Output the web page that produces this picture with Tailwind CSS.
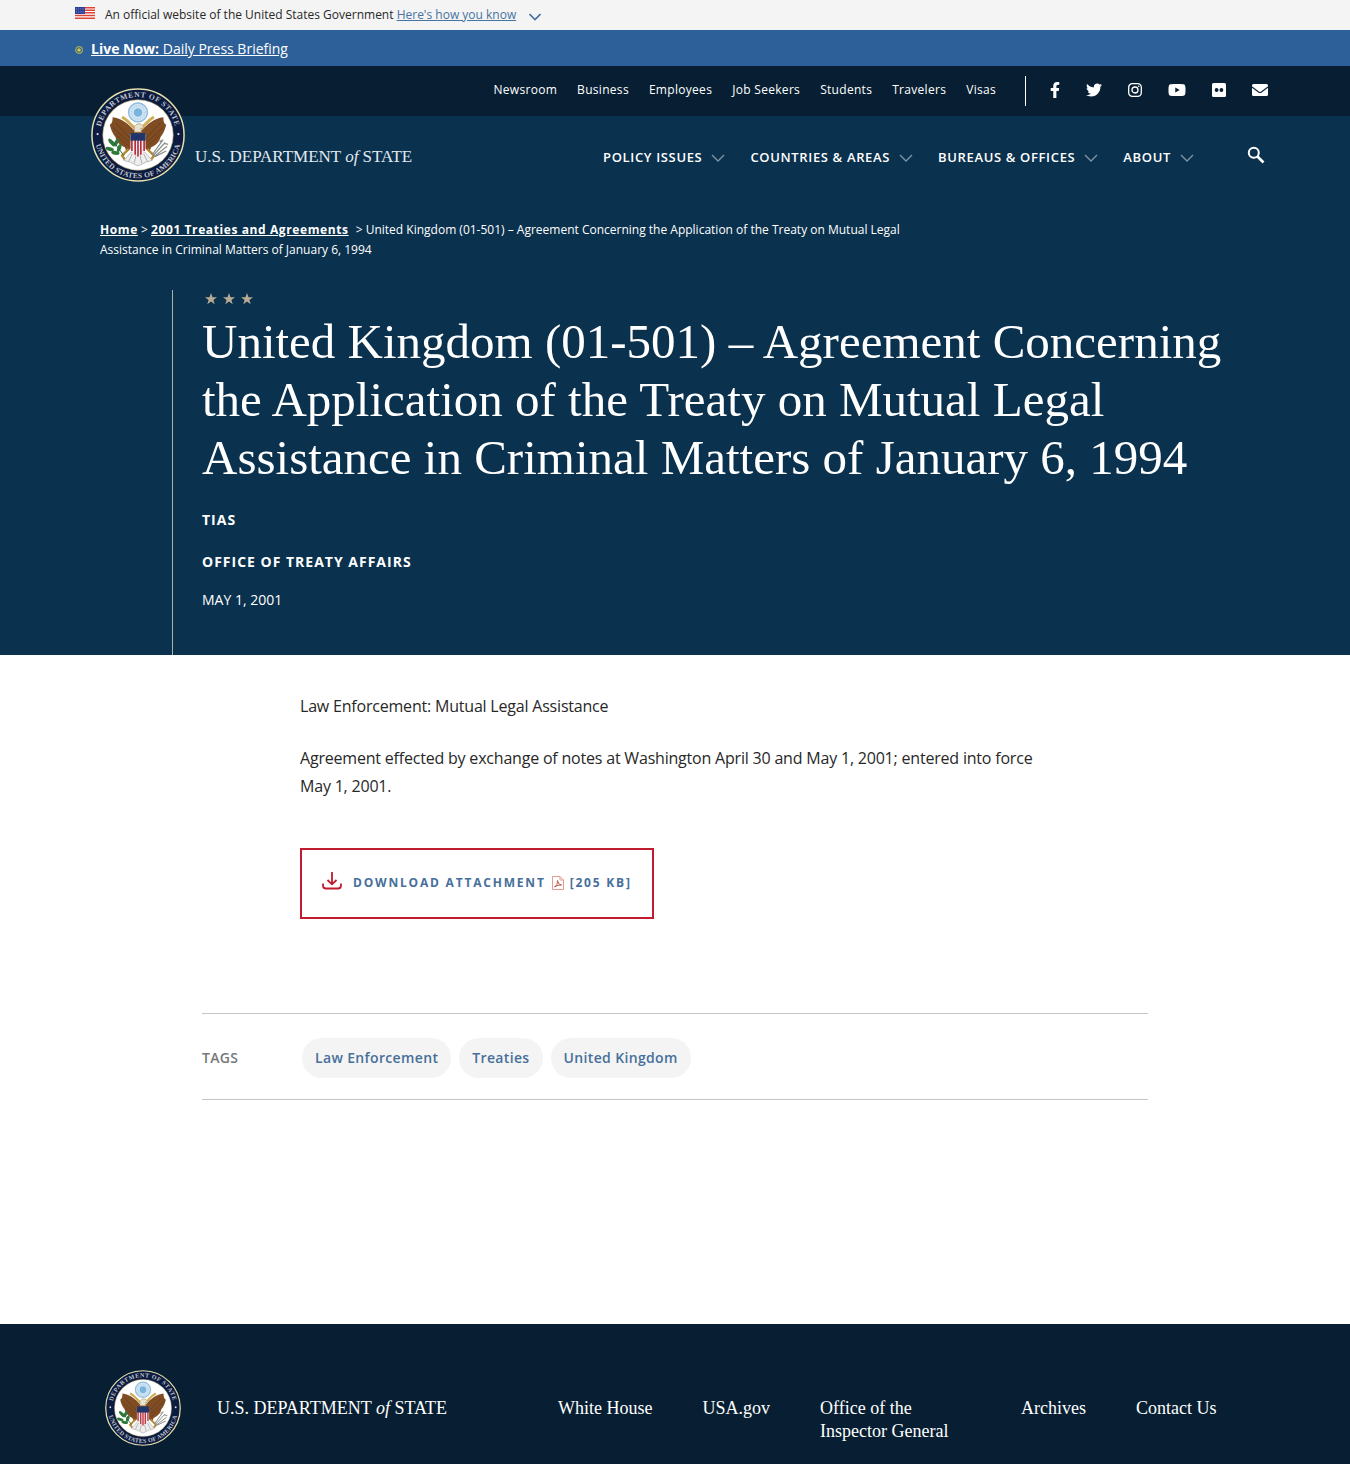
<!DOCTYPE html>
<html lang="en">
<head>
<meta charset="utf-8">
<meta name="viewport" content="width=device-width, initial-scale=1">
<title>United Kingdom (01-501) - United States Department of State</title>
<script src="https://cdn.jsdelivr.net/npm/@tailwindcss/browser@4"></script>
</head>
<body class="flex min-h-screen flex-col bg-white font-['Open_Sans',sans-serif] text-[#282828]">

<svg class="hidden" aria-hidden="true">
  <symbol id="seal" viewBox="0 0 100 100">
    <circle cx="50" cy="50" r="49" fill="#0c1b40" stroke="#e6dfae" stroke-width="1.6"/>
    <circle cx="50" cy="50" r="37.500" fill="#fff" stroke="#b9a96a" stroke-width=".6"/>
    <path id="arcTop" d="M9.500 50A40.500 40.500 0 0 1 90.500 50" fill="none"/>
    <path id="arcBottom" d="M4 50A46 46 0 0 0 96 50" fill="none"/>
    <g fill="#c3c8d0" font-family="Liberation Serif, serif" font-size="8" font-weight="bold" text-anchor="middle">
      <text letter-spacing=".7"><textPath href="#arcTop" startOffset="50%">DEPARTMENT OF STATE</textPath></text>
      <text letter-spacing=".3"><textPath href="#arcBottom" startOffset="50%">UNITED STATES OF AMERICA</textPath></text>
    </g>
    <circle cx="7" cy="49" r="1.200" fill="#ddd"/><circle cx="93" cy="49" r="1.200" fill="#ddd"/>
    <circle cx="50" cy="26" r="10" fill="#d5e7f5" stroke="#8fbcdc" stroke-width="1.500"/>
    <circle cx="50" cy="26" r="7" fill="none" stroke="#b6d4ea" stroke-width="2" stroke-dasharray="1.500 1"/>
    <circle cx="50" cy="26" r="4.500" fill="#79b4dc"/>
    <path d="M46 45C40 38 32 32 23 31C23 36 22 38 20 39C21 44 23 48 26 52C27 57 31 61 36 63L38 68L44 63L50 66L56 63L62 68L64 63C69 61 73 57 74 52C77 48 79 44 80 39C78 38 77 36 77 31C68 32 60 38 54 45Z" fill="#804c24"/>
    <path d="M26 37L43 55M23 42L41 58M27 50L40 62M74 37L57 55M77 42L59 58M73 50L60 62" stroke="#6a3d18" stroke-width="1"/>
    <path d="M33 31C38 33 43 40 47 43M67 31C62 33 57 40 53 43" fill="none" stroke="#d0ad55" stroke-width="3"/>
    <path d="M46 47L46 41Q50 36 54 39L57 42L53 43L54 47Z" fill="#e9e2cf" stroke="#8a6d35" stroke-width=".5"/>
    <path d="M40 65L33 72L36 76M60 65L67 72L64 76" fill="none" stroke="#b58a30" stroke-width="2.500"/>
    <path d="M43 68L35 77L42 79L50 83L58 79L65 77L57 68Z" fill="#eee" stroke="#aaa" stroke-width=".8"/>
    <path d="M44 70L40 78M48 71L46 80M52 71L54 80M56 70L60 78" stroke="#999" stroke-width=".8"/>
    <path d="M42 49H58V64Q57 70 50 73Q43 70 42 64Z" fill="#f3eeee"/>
    <path d="M43.500 54V67M47 54V71M50 54V73M53 54V71M56.500 54V67" stroke="#b6283a" stroke-width="1.700"/>
    <path d="M42 48H58V56H42Z" fill="#20366b"/>
    <g fill="#2f7a3b"><ellipse cx="22" cy="58" rx="2" ry="5" transform="rotate(-40 22 58)"/><ellipse cx="27" cy="58" rx="2" ry="4.500" transform="rotate(25 27 58)"/><ellipse cx="20" cy="65" rx="2" ry="4.500" transform="rotate(-75 20 65)"/><ellipse cx="30" cy="64" rx="2" ry="4.500" transform="rotate(20 30 64)"/><ellipse cx="26" cy="69" rx="2" ry="4.500" transform="rotate(-80 26 69)"/></g>
    <path d="M24 57L35 72" stroke="#2f6a35" stroke-width="1"/>
    <path d="M65 71L76 56M66 72L79 58M67 73L81 62M68 73L80 67M73 57L77 55M78 59L82 60" stroke="#8b8d88" stroke-width="1.300"/>
  </symbol>
  <symbol id="chevron" viewBox="0 0 14 8"><path d="M1 1L7 7L13 1" fill="none" stroke="currentColor" stroke-width="1.300"/></symbol>
</svg>

<section class="bg-[#f4f4f4]" aria-label="Official website">
  <div class="mx-auto flex h-[30px] max-w-[1200px] items-center text-xs">
    <svg class="mb-1 h-3 w-5" viewBox="0 0 20 12" aria-hidden="true">
      <path d="M0 0H20V12H0Z" fill="#fff"/>
      <path d="M0 .7H20M0 3.200H20M0 5.700H20M0 8.500H20M0 11.200H20" stroke="#dc4437" stroke-width="1.400"/>
      <path d="M0 0H10V7H0Z" fill="#2d3f96"/>
      <path d="M1 2H10M1 5H10" stroke="#9aa6d8" stroke-width=".8" stroke-dasharray="1 1.200"/>
    </svg>
    <p class="ml-[10px]">An official website of the United States Government <button type="button" class="text-[#4673a0] underline">Here's how you know</button></p>
    <svg class="mt-1 ml-[13px] h-2 w-3 text-[#4a6fa5]" viewBox="0 0 12 8" aria-hidden="true"><path d="M.5 1L6 6.500L11.500 1" fill="none" stroke="currentColor" stroke-width="1.700"/></svg>
  </div>
</section>

<section class="bg-[#2d5f99] text-white" aria-label="Live events">
  <div class="mx-auto flex h-9 max-w-[1200px] items-center gap-2 pt-[2px] text-sm">
    <svg class="mt-[2px] size-2" viewBox="0 0 8 8" aria-hidden="true"><circle cx="4" cy="4" r="3.300" fill="none" stroke="#a3ad55" stroke-width="1.200"/><circle cx="4" cy="4" r="1.800" fill="#d6c843"/></svg>
    <a href="#" class="underline"><strong>Live Now:</strong> Daily Press Briefing</a>
  </div>
</section>

<header class="relative bg-[#0a314d] text-white">
  <div class="bg-[#081f33]">
    <div class="mx-auto flex h-[50px] max-w-[1200px] items-center justify-end pr-[7px]">
      <nav class="flex gap-5 pb-[3px] text-xs tracking-wide" aria-label="Audiences">
        <a href="#">Newsroom</a><a href="#">Business</a><a href="#">Employees</a><a href="#">Job Seekers</a><a href="#">Students</a><a href="#">Travelers</a><a href="#">Visas</a>
      </nav>
      <div class="ml-[29px] flex h-[30px] items-center gap-[26px] border-l border-white pb-[2px] pl-6">
        <a href="#" aria-label="Facebook"><svg class="h-4 w-[10px]" viewBox="0 0 320 512" fill="currentColor"><path d="M279.140 288l14.220-92.660h-88.910v-60.130c0-25.350 12.420-50.060 52.240-50.060h40.420V6.260S260.430 0 225.360 0c-73.220 0-121.080 44.380-121.080 124.720v70.620H22.890V288h81.390v224h100.170V288z"/></svg></a>
        <a href="#" aria-label="Twitter"><svg class="size-4" viewBox="0 0 512 512" fill="currentColor"><path d="M459.370 151.716c.325 4.548.325 9.097.325 13.645 0 138.720-105.583 298.558-298.558 298.558-59.452 0-114.680-17.219-161.137-47.106 8.447.974 16.568 1.299 25.340 1.299 49.055 0 94.213-16.568 130.274-44.832-46.132-.975-84.792-31.188-98.112-72.772 6.498.974 12.995 1.624 19.818 1.624 9.421 0 18.843-1.300 27.614-3.573-48.081-9.747-84.143-51.980-84.143-102.985v-1.299c13.969 7.797 30.214 12.670 47.431 13.319-28.264-18.843-46.781-51.005-46.781-87.391 0-19.492 5.197-37.360 14.294-52.954 51.655 63.675 129.300 105.258 216.365 109.807-1.624-7.797-2.599-15.918-2.599-24.040 0-57.828 46.782-104.934 104.934-104.934 30.213 0 57.502 12.670 76.670 33.137 23.715-4.548 46.456-13.320 66.599-25.340-7.798 24.366-24.366 44.833-46.132 57.827 21.117-2.273 41.584-8.122 60.426-16.243-14.292 20.791-32.161 39.308-52.628 54.253z"/></svg></a>
        <a href="#" aria-label="Instagram"><svg class="h-4 w-[14px]" viewBox="0 0 14 16" fill="none" stroke="currentColor" stroke-width="1.300"><rect x=".7" y="1.700" width="12.600" height="12.600" rx="3.600"/><circle cx="7" cy="8" r="3"/><circle cx="10.700" cy="4.300" r=".8" fill="currentColor" stroke="none"/></svg></a>
        <a href="#" aria-label="YouTube"><svg class="h-4 w-[18px]" viewBox="0 0 576 512" fill="currentColor"><path d="M549.655 124.083c-6.281-23.650-24.787-42.276-48.284-48.597C458.781 64 288 64 288 64S117.220 64 74.629 75.486c-23.497 6.322-42.003 24.947-48.284 48.597-11.412 42.867-11.412 132.305-11.412 132.305s0 89.438 11.412 132.305c6.281 23.650 24.787 41.500 48.284 47.821C117.220 448 288 448 288 448s170.780 0 213.371-11.486c23.497-6.321 42.003-24.171 48.284-47.821 11.412-42.867 11.412-132.305 11.412-132.305s0-89.438-11.412-132.305zm-317.510 213.508V175.185l142.739 81.205-142.739 81.201z"/></svg></a>
        <a href="#" aria-label="Flickr"><svg class="h-4 w-[14px]" viewBox="0 0 14 16"><rect y="1" width="14" height="14" rx="1.500" fill="currentColor"/><circle cx="4.600" cy="8" r="1.900" fill="#081f33"/><circle cx="9.400" cy="8" r="1.900" fill="#081f33"/></svg></a>
        <a href="#" aria-label="Email updates"><svg class="size-4" viewBox="0 0 16 16"><rect y="2" width="16" height="12" rx="1.500" fill="currentColor"/><path d="M0 5L6.600 10Q8 11 9.400 10L16 5" fill="none" stroke="#081f33" stroke-width="1.100"/></svg></a>
      </div>
    </div>
  </div>
  <div class="mx-auto flex h-[83px] max-w-[1200px] items-center justify-end pr-[10px]">
    <nav class="flex gap-[25px] text-[13px] font-semibold tracking-wider" aria-label="Main">
      <button type="button" class="flex items-center gap-[9px] uppercase">Policy Issues<svg class="h-2 w-[14px] text-[#7f97a8]" aria-hidden="true"><use href="#chevron"/></svg></button>
      <button type="button" class="flex items-center gap-[9px] uppercase">Countries &amp; Areas<svg class="h-2 w-[14px] text-[#7f97a8]" aria-hidden="true"><use href="#chevron"/></svg></button>
      <button type="button" class="flex items-center gap-[9px] uppercase">Bureaus &amp; Offices<svg class="h-2 w-[14px] text-[#7f97a8]" aria-hidden="true"><use href="#chevron"/></svg></button>
      <button type="button" class="flex items-center gap-[9px] uppercase">About<svg class="h-2 w-[14px] text-[#7f97a8]" aria-hidden="true"><use href="#chevron"/></svg></button>
    </nav>
    <button type="button" class="ml-[53px] pb-[6px]" aria-label="Search"><svg class="size-[18px]" viewBox="0 0 18 18" fill="none" stroke="currentColor" stroke-width="2"><circle cx="6.800" cy="6.800" r="5"/><path d="M10.500 10.500L16.500 16.500" stroke-width="2.600"/></svg></button>
  </div>
  <div class="absolute inset-x-0 top-[22px] mx-auto h-0 max-w-[1200px]">
    <a href="#" class="ml-4 inline-flex items-end gap-[10px]">
      <svg class="size-[94px]" aria-hidden="true"><use href="#seal"/></svg>
      <span class="pb-[15px] font-['Liberation_Serif',serif] text-[17px] leading-5 text-[#e3eaf0]">U.S. DEPARTMENT <i>of</i> STATE</span>
    </a>
  </div>
</header>

<main class="grow">
  <div class="bg-[#0a314d] text-white">
    <div class="mx-auto max-w-[1150px] pt-[21px]">
      <nav class="max-w-[820px] text-xs leading-5" aria-label="Breadcrumb">
        <a href="#" class="font-bold tracking-wider underline">Home</a> &gt; <a href="#" class="mr-1 font-bold tracking-wider underline">2001 Treaties and Agreements</a> &gt; United Kingdom (01-501) – Agreement Concerning the Application of the Treaty on Mutual Legal Assistance in Criminal Matters of January 6, 1994
      </nav>
      <div class="mt-[30px] ml-[72px] border-l border-[#aeb0a3] pb-[45px] pl-[29px]">
        <svg class="ml-[3px] h-[18px] w-12" viewBox="0 0 48 18" fill="#b9ab94" aria-hidden="true">
          <path id="star" d="M6 3L7.500 7.300H12L8.400 9.900L9.700 14.200L6 11.600L2.300 14.200L3.600 9.900L0 7.300H4.500Z"/>
          <use href="#star" x="18"/><use href="#star" x="36"/>
        </svg>
        <h1 class="mt-[5px] font-['Liberation_Serif',serif] text-[49px] leading-[58px]">United Kingdom (01-501) – Agreement Concerning the Application of the Treaty on Mutual Legal Assistance in Criminal Matters of January 6, 1994</h1>
        <p class="mt-[23px] text-sm font-bold tracking-[1px]">TIAS</p>
        <p class="mt-[22px] text-sm font-bold tracking-[1px]">OFFICE OF TREATY AFFAIRS</p>
        <p class="mt-[18px] text-sm">MAY 1, 2001</p>
      </div>
    </div>
  </div>

  <article class="mx-auto max-w-[750px] pt-[37px] text-base leading-7 tracking-[-0.2px]">
    <p>Law Enforcement: Mutual Legal Assistance</p>
    <p class="mt-6">Agreement effected by exchange of notes at Washington April 30 and May 1, 2001; entered into force May 1, 2001.</p>
    <a href="#" class="mt-12 inline-flex h-[71px] items-center border-2 border-[#c01b2e] px-5 pb-[2px] text-xs font-bold tracking-[0.15em] text-[#466f9b]">
      <svg class="mr-[11px] mb-1 h-5 w-5" viewBox="0 0 20 20" fill="none" stroke="#c01b2e" stroke-width="1.800" aria-hidden="true"><path d="M1 12.500V14.500Q1 17.500 4 17.500H16Q19 17.500 19 14.500V12.500M10 1V13M5.500 9L10 13.300L14.500 9"/></svg>
      DOWNLOAD ATTACHMENT
      <svg class="mx-[6px] h-[14px] w-3" viewBox="0 0 12 14" fill="none" stroke="#e39c8e" aria-hidden="true"><path d="M.5 .5H8L11.500 4V13.500H.5ZM8 .5V4H11.500"/><path d="M2.500 11Q6 9 5.500 4.500Q6 8.500 9.500 9Q6 8.500 2.500 11Z" stroke="#bd5a4c"/></svg>
      [205 KB]
    </a>
  </article>

  <section class="mx-auto mt-[94px] flex max-w-[946px] items-center border-y border-[#c3c5c7] pt-6 pb-[21px] text-sm font-semibold tracking-wide">
    <h2 class="w-[100px] text-[#76797c]">TAGS</h2>
    <ul class="flex gap-2 text-[#466f9b]">
      <li><a href="#" class="block rounded-[20px] bg-[#f4f4f4] px-[13px] py-[10px]">Law Enforcement</a></li>
      <li><a href="#" class="block rounded-[20px] bg-[#f4f4f4] px-[13px] py-[10px]">Treaties</a></li>
      <li><a href="#" class="block rounded-[20px] bg-[#f4f4f4] px-[13px] py-[10px]">United Kingdom</a></li>
    </ul>
  </section>
</main>

<footer class="mt-[222px] bg-[#081f33] text-white">
  <div class="mx-auto flex max-w-[1140px] items-start pt-[46px] pb-[18px] font-['Liberation_Serif',serif]">
    <a href="#" class="flex items-center gap-9">
      <svg class="size-[76px]" aria-hidden="true"><use href="#seal"/></svg>
      <span class="text-[18px]">U.S. DEPARTMENT <i>of</i> STATE</span>
    </a>
    <nav class="mt-[27px] ml-[111px] flex gap-[50px] text-[18px] leading-[23px]" aria-label="Footer">
      <a href="#">White House</a><a href="#">USA.gov</a><a href="#" class="w-[151px]">Office of the Inspector General</a><a href="#">Archives</a><a href="#">Contact Us</a>
    </nav>
  </div>
</footer>
</body>
</html>
